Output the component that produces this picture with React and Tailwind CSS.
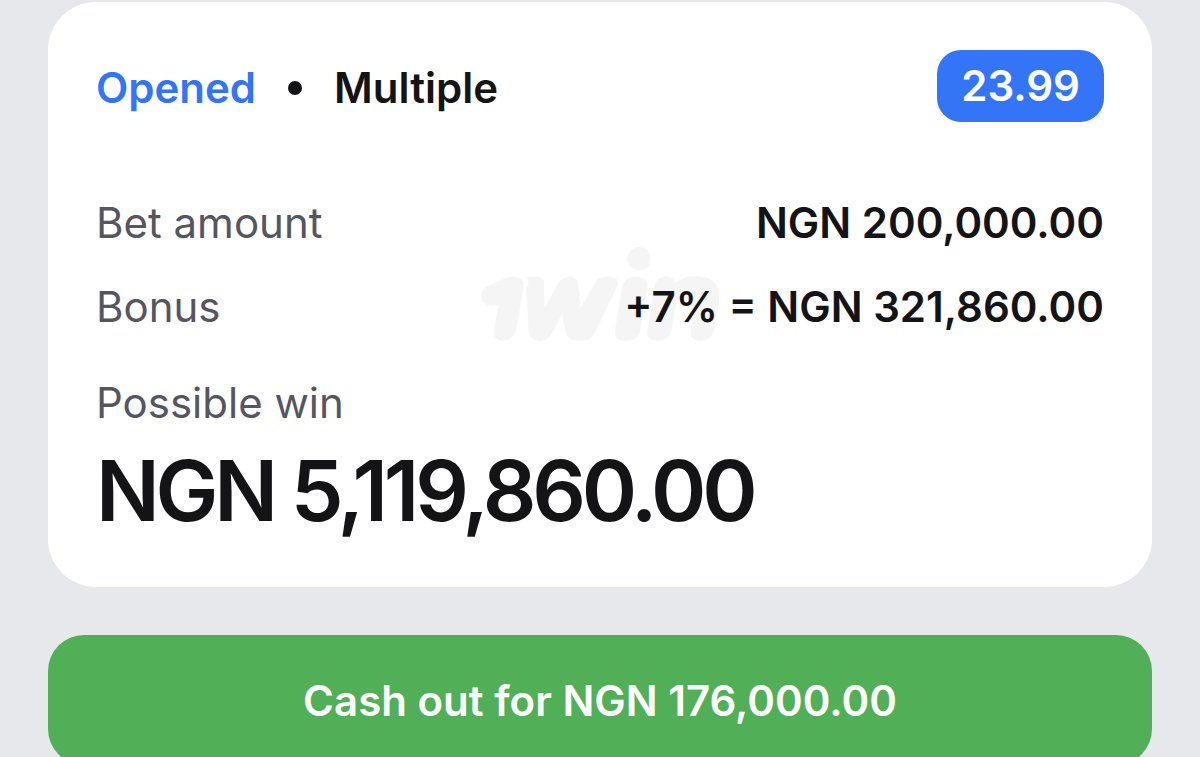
import React from "react";

const rows = [
  { label: "Bet amount", value: "NGN 200,000.00" },
  { label: "Bonus", value: "+7% = NGN 321,860.00" },
];

function Watermark() {
  return (
    <svg
      viewBox="0 0 840 390"
      className="absolute top-[228px] left-1/2 h-[130px] w-[280px] -translate-x-1/2 text-[#f5f5f5]"
      fill="currentColor"
      aria-hidden="true"
    >
      <path d="M82 169 L138 144 Q192 130 191 172 L168 300 Q158 332 128 332 Q98 330 102 299 L115 225 L96 228 Q66 226 63 198 Q65 177 82 169Z" />
      <path d="M198 142 L232 140 Q252 140 252 160 L254 234 L295 160 Q305 140 330 140 Q352 140 354 162 L362 234 L405 158 Q415 140 440 140 Q482 138 472 168 L405 308 Q393 332 366 332 L350 332 Q320 332 316 304 L306 252 L276 310 Q265 332 240 332 Q209 332 206 302 L199 175 Q213 156 198 142Z" />
      <circle cx="537" cy="86" r="35" />
      <path d="M521 140 Q566 138 562 173 L542 295 Q536 332 502 332 L492 332 Q460 332 465 299 L486 175 Q491 142 521 140Z" />
      <path d="M611 140 Q642 138 644 160 Q673 138 710 138 Q785 142 777 213 L762 299 Q755 332 724 332 Q686 332 692 296 L704 226 Q707 200 681 200 Q651 200 646 230 L635 299 Q628 332 597 332 Q557 332 563 299 L582 175 Q587 142 611 140Z" />
    </svg>
  );
}

export default function App() {
  return (
    <div className="h-screen overflow-hidden bg-[#e7e8ec] px-12 pt-0.5 font-['Inter',sans-serif] text-[#141416]">
      <section className="relative rounded-[48px] bg-white px-12 pt-12 pb-[42px]">
        <Watermark />
        <div className="relative">
          <header className="flex items-start justify-between text-[42px] leading-[72px] font-semibold">
            <div className="flex items-center pt-0.5">
              <span className="text-[#3375f6]">Opened</span>
              <span className="mx-8 size-3.5 rounded-full bg-[#141416]" />
              <span>Multiple</span>
            </div>
            <span className="rounded-3xl bg-[#3375f6] px-6 text-white">
              23.99
            </span>
          </header>

          <dl className="mt-[69px] text-[42px] leading-[60px]">
            {rows.map((row) => (
              <div key={row.label} className="mb-6 flex justify-between">
                <dt className="text-[#55565f]">{row.label}</dt>
                <dd className="font-semibold">{row.value}</dd>
              </div>
            ))}
            <div className="mt-9">
              <dt className="text-[#55565f]">Possible win</dt>
              <dd className="mt-1 text-[84px] leading-[108px] font-semibold tracking-tighter">
                NGN 5,119,860.00
              </dd>
            </div>
          </dl>
        </div>
      </section>

      <button
        type="button"
        className="mt-12 h-[130px] w-full rounded-[36px] bg-[#50af57] text-[42px] font-semibold text-white"
      >
        Cash out for NGN 176,000.00
      </button>
    </div>
  );
}
